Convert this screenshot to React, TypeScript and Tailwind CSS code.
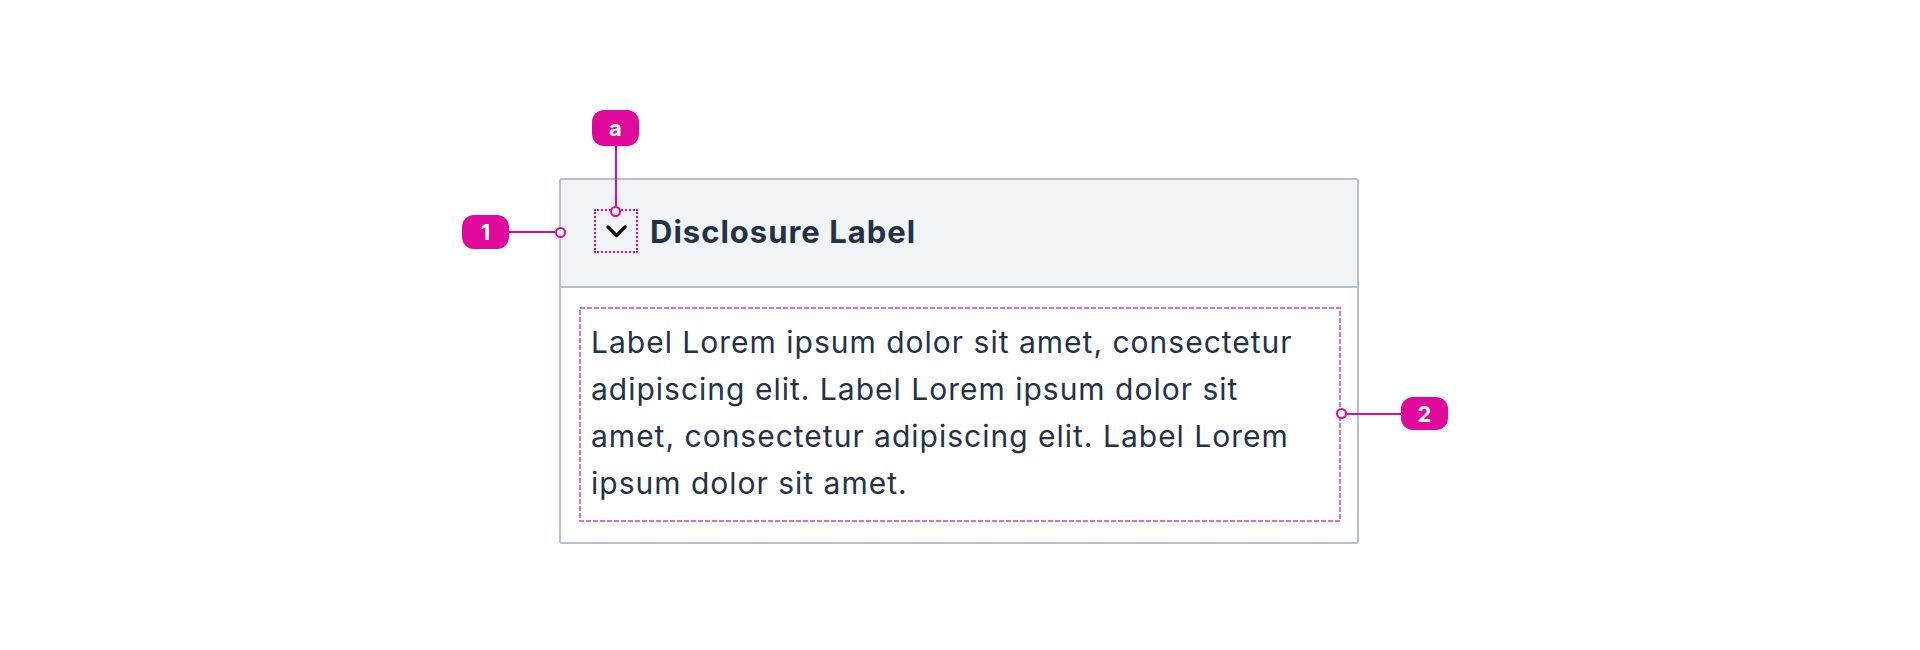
import React from "react";

const font = { fontFamily: "Inter, 'Noto Sans', sans-serif" };

function Badge({ label, h }: { label: string; h: string }) {
  return (
    <div
      className={`flex w-[47px] shrink-0 items-center justify-center rounded-[12px] bg-[#e0079b] text-[22px] font-bold leading-none text-white ${h}`}
      style={font}
    >
      {label}
    </div>
  );
}

function Dot() {
  return <div className="h-[11px] w-[11px] shrink-0 rounded-full border-2 border-[#e0079b] bg-white" />;
}

export default function App() {
  return (
    <div className="h-[650px] w-full bg-white" style={font}>
      <div className="flex justify-center pt-[178px] pr-[2px]">
        <div className="relative w-[800px] rounded-[3px] border-2 border-[#b5c0cc]">
          {/* header */}
          <div className="flex h-[108px] items-start gap-[12px] rounded-t-[2px] border-b-2 border-[#b5c0cc] bg-[#f0f4f7] pl-[33px] pt-[29px]">
            <div className="flex h-[44px] w-[44px] items-center justify-center border-2 border-dotted border-[#e0079b]">
              <svg width="21" height="13" viewBox="0 0 21 13" fill="none">
                <polyline
                  points="2,2 10.5,10.5 19,2"
                  stroke="#0f1114"
                  strokeWidth="3.2"
                  strokeLinecap="round"
                  strokeLinejoin="round"
                />
              </svg>
            </div>
            <div className="mt-[1px] text-[31px] font-bold leading-[44px] tracking-[1px] text-[#233246]">
              Disclosure Label
            </div>
          </div>
          {/* body */}
          <div className="pb-[20px] pl-[18px] pr-[16px] pt-[19px]">
            <div className="relative pb-[15px] pl-[12px] pt-[12px]">
              <svg className="pointer-events-none absolute inset-0 h-full w-full">
                <rect
                  x="1"
                  y="1"
                  width="calc(100% - 2px)"
                  height="calc(100% - 2px)"
                  fill="none"
                  stroke="#e070c0"
                  strokeWidth="2"
                  strokeDasharray="5 2"
                />
              </svg>
              <p className="w-[716px] text-[30px] leading-[47px] tracking-[1px] text-[#233246]">
                Label Lorem ipsum dolor sit amet, consectetur adipiscing elit. Label Lorem ipsum dolor sit amet,
                consectetur adipiscing elit. Label Lorem ipsum dolor sit amet.
              </p>
            </div>
          </div>

          {/* annotation 1 */}
          <div className="absolute left-[-99px] top-[35px] flex items-center">
            <Badge label="1" h="h-[34px]" />
            <div className="h-[2px] w-[46px] bg-[#e0079b]" />
            <Dot />
          </div>

          {/* annotation a */}
          <div className="absolute left-[31px] top-[-70px] flex flex-col items-center">
            <Badge label="a" h="h-[36px]" />
            <div className="h-[60px] w-[2px] bg-[#e0079b]" />
            <Dot />
          </div>

          {/* annotation 2 */}
          <div className="absolute left-[775px] top-[217px] flex items-center">
            <Dot />
            <div className="h-[2px] w-[54px] bg-[#e0079b]" />
            <Badge label="2" h="h-[33px]" />
          </div>
        </div>
      </div>
    </div>
  );
}
